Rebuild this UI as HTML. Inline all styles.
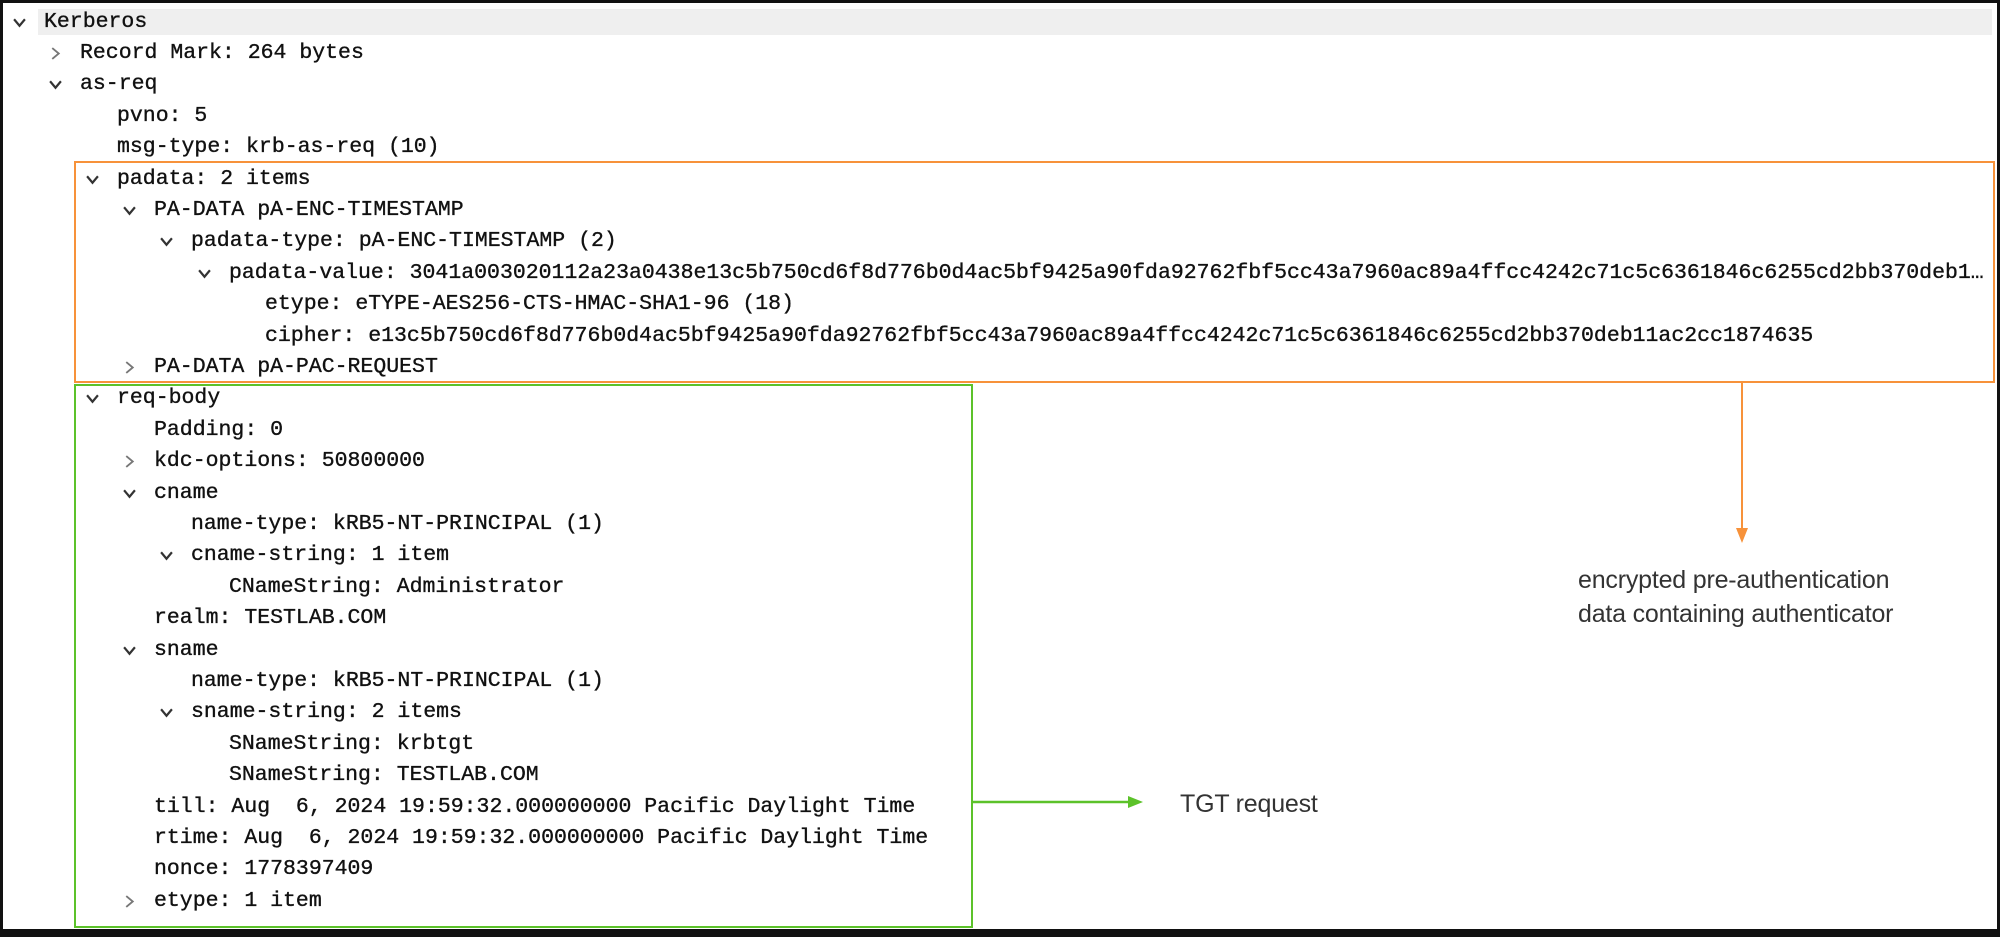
<!DOCTYPE html>
<html><head><meta charset="utf-8"><style>
html,body{margin:0;padding:0;background:#fff;}
body{width:2000px;height:936px;position:relative;overflow:hidden;}
.frame{position:absolute;left:0;top:0;width:1994px;height:926px;border-left:3px solid #111;border-top:3px solid #111;border-right:5px solid #111;border-bottom:8px solid #111;box-sizing:content-box;}
.row{position:absolute;left:0;height:31px;line-height:31px;font-family:"Liberation Mono",monospace;font-size:21.5px;color:#111;white-space:nowrap;-webkit-text-stroke:0.35px #111;}
.t{position:absolute;top:0;}
.ch{position:absolute;top:9px;width:13px;height:13px;}
.sans{position:absolute;font-family:"Liberation Sans",sans-serif;font-size:25px;color:#333;white-space:nowrap;letter-spacing:-0.2px;}
</style></head><body>
<div class="frame"></div>
<div style="position:absolute;left:38px;top:9px;width:1954px;height:26px;background:#efefef;"></div>
<div style="position:absolute;left:74px;top:161px;width:1917px;height:218px;border:2px solid #f7923a;"></div>
<div style="position:absolute;left:74px;top:384px;width:895px;height:540px;border:2px solid #5cc22a;"></div>
<svg width="2000" height="936" style="position:absolute;left:0;top:0">
<line x1="1742" y1="381" x2="1742" y2="530" stroke="#f7923a" stroke-width="2"/>
<polygon points="1736,528 1748,528 1742,543" fill="#f7923a"/>
<line x1="971" y1="802" x2="1130" y2="802" stroke="#5cc22a" stroke-width="2.5"/>
<polygon points="1128,796 1128,808 1143,802" fill="#5cc22a"/>
</svg>
<div class="sans" style="left:1578px;top:566px;">encrypted pre-authentication</div>
<div class="sans" style="left:1578px;top:600px;">data containing authenticator</div>
<div class="sans" style="left:1180px;top:790px;">TGT request</div>
<div id="rows"></div>
<script>
var rows=[
[0,'v','Kerberos'],[1,'>','Record Mark: 264 bytes'],[1,'v','as-req'],[2,'','pvno: 5'],
[2,'','msg-type: krb-as-req (10)'],[2,'v','padata: 2 items'],[3,'v','PA-DATA pA-ENC-TIMESTAMP'],
[4,'v','padata-type: pA-ENC-TIMESTAMP (2)'],
[5,'v','padata-value: 3041a003020112a23a0438e13c5b750cd6f8d776b0d4ac5bf9425a90fda92762fbf5cc43a7960ac89a4ffcc4242c71c5c6361846c6255cd2bb370deb1\u2026'],
[6,'','etype: eTYPE-AES256-CTS-HMAC-SHA1-96 (18)'],
[6,'','cipher: e13c5b750cd6f8d776b0d4ac5bf9425a90fda92762fbf5cc43a7960ac89a4ffcc4242c71c5c6361846c6255cd2bb370deb11ac2cc1874635'],
[3,'>','PA-DATA pA-PAC-REQUEST'],[2,'v','req-body'],[3,'','Padding: 0'],[3,'>','kdc-options: 50800000'],
[3,'v','cname'],[4,'','name-type: kRB5-NT-PRINCIPAL (1)'],[4,'v','cname-string: 1 item'],
[5,'','CNameString: Administrator'],[3,'','realm: TESTLAB.COM'],[3,'v','sname'],
[4,'','name-type: kRB5-NT-PRINCIPAL (1)'],[4,'v','sname-string: 2 items'],[5,'','SNameString: krbtgt'],
[5,'','SNameString: TESTLAB.COM'],[3,'','till: Aug  6, 2024 19:59:32.000000000 Pacific Daylight Time'],
[3,'','rtime: Aug  6, 2024 19:59:32.000000000 Pacific Daylight Time'],[3,'','nonce: 1778397409'],[3,'>','etype: 1 item']];
var xs=[44,80,117,154,191,229,265];
var h='';
rows.forEach(function(r,i){
 var y=(22+31.4*i-15.5).toFixed(1), x=xs[r[0]];
 h+='<div class="row" style="top:'+y+'px"><span class="t" style="left:'+x+'px">'+r[2].replace(/  /g,' &nbsp;')+'</span>';
 if(r[1]=='v') h+='<svg class="ch" style="left:'+(x-31)+'px" viewBox="0 0 12 12"><polyline points="1,3 6,9 11,3" fill="none" stroke="#333" stroke-width="2"/></svg>';
 if(r[1]=='>') h+='<svg class="ch" style="left:'+(x-31)+'px" viewBox="0 0 12 12"><polyline points="3,1 9,6 3,11" fill="none" stroke="#777" stroke-width="1.7"/></svg>';
 h+='</div>';
});
document.getElementById('rows').innerHTML=h;
</script>
</body></html>
